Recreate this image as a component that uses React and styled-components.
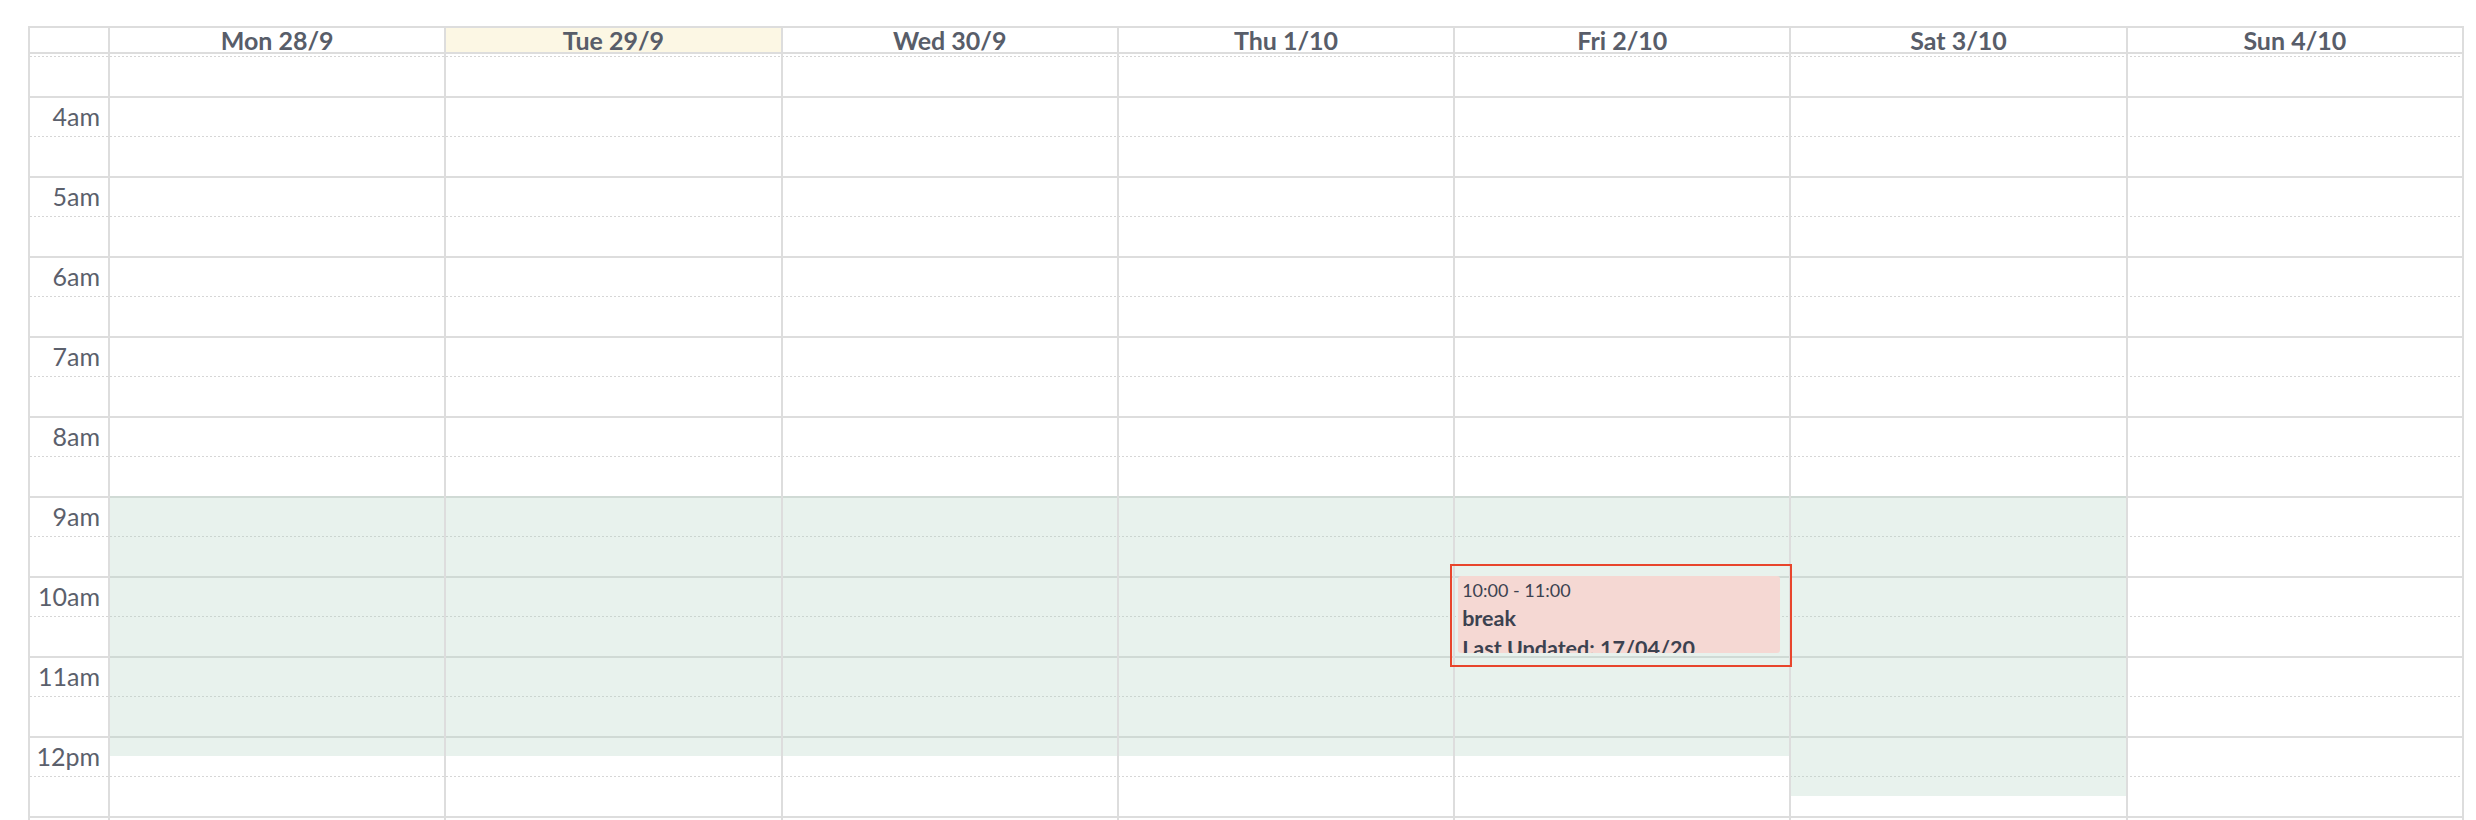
import React from 'react';
import styled, { createGlobalStyle } from 'styled-components';

const SLOT_HEIGHT = 40;
const FIRST_SLOT = 3 * 60 + 30; // the view is scrolled to 3:30
const LAST_SLOT = 13 * 60;
const BODY_OFFSET = 2;

const DAYS = [
  { key: 'mon', label: 'Mon 28/9', background: [{ start: '9:00', end: '12:15' }] },
  { key: 'tue', label: 'Tue 29/9', today: true, background: [{ start: '9:00', end: '12:15' }] },
  { key: 'wed', label: 'Wed 30/9', background: [{ start: '9:00', end: '12:15' }] },
  { key: 'thu', label: 'Thu 1/10', background: [{ start: '9:00', end: '12:15' }] },
  {
    key: 'fri',
    label: 'Fri 2/10',
    background: [{ start: '9:00', end: '12:15' }],
    events: [
      {
        id: 1,
        start: '10:00',
        end: '11:00',
        title: 'break',
        note: 'Last Updated: 17/04/20',
        selected: true,
      },
    ],
  },
  { key: 'sat', label: 'Sat 3/10', background: [{ start: '9:00', end: '12:45' }] },
  { key: 'sun', label: 'Sun 4/10' },
];

const toMinutes = (time) => {
  const [h, m] = time.split(':').map(Number);
  return h * 60 + m;
};

const toOffset = (time) => BODY_OFFSET + ((toMinutes(time) - FIRST_SLOT) / 30) * SLOT_HEIGHT;
const toHeight = (start, end) => ((toMinutes(end) - toMinutes(start)) / 30) * SLOT_HEIGHT;

const hourLabel = (minutes) => {
  const h = Math.floor(minutes / 60);
  if (h === 0) return '12am';
  if (h === 12) return '12pm';
  return h > 12 ? `${h - 12}pm` : `${h}am`;
};

const slots = [];
for (let m = FIRST_SLOT; m <= LAST_SLOT; m += 30) {
  slots.push({ minutes: m, hour: m % 60 === 0 });
}

function App() {
  return (
    <>
      <GlobalStyle />
      <Page>
        <Calendar>
          <HeaderRow>
            <AxisCell />
            {DAYS.map((day) => (
              <HeaderCell key={day.key} $today={day.today}>
                {day.label}
              </HeaderCell>
            ))}
          </HeaderRow>
          <Body>
            <Slats>
              {slots.map((slot) => (
                <SlotRow key={slot.minutes} $hour={slot.hour}>
                  <TimeLabel>{slot.hour ? hourLabel(slot.minutes) : ''}</TimeLabel>
                  <div />
                </SlotRow>
              ))}
            </Slats>
            <Columns>
              <AxisCell />
              {DAYS.map((day) => (
                <DayColumn key={day.key}>
                  {(day.background || []).map((bg) => (
                    <BgEvent
                      key={bg.start}
                      style={{ top: toOffset(bg.start), height: toHeight(bg.start, bg.end) }}
                    />
                  ))}
                  {(day.events || []).map((event) => (
                    <EventSlot
                      key={event.id}
                      $selected={event.selected}
                      style={{ top: toOffset(event.start), height: toHeight(event.start, event.end) }}
                    >
                      <EventBox>
                        <EventTime>
                          {event.start} - {event.end}
                        </EventTime>
                        <EventTitle>{event.title}</EventTitle>
                        <EventTitle>{event.note}</EventTitle>
                      </EventBox>
                    </EventSlot>
                  ))}
                </DayColumn>
              ))}
            </Columns>
          </Body>
        </Calendar>
      </Page>
    </>
  );
}

export default App;

const GlobalStyle = createGlobalStyle`
  html, body {
    margin: 0;
    height: 100%;
    overflow: hidden;
    background: #fff;
  }
  body {
    font-family: Lato, 'Open Sans', 'Liberation Sans', sans-serif;
    color: #585d69;
  }
`;

const Page = styled.div`
  height: 820px;
  box-sizing: border-box;
  padding: 26px 0 0 28px;
`;

const Calendar = styled.div`
  width: 2436px;
  height: 794px;
  box-sizing: border-box;
  border: 2px solid #dddddd;
  border-bottom: 0;
  display: flex;
  flex-direction: column;
`;

const HeaderRow = styled.div`
  display: grid;
  grid-template-columns: 78px repeat(7, 1fr);
  height: 26px;
  box-sizing: border-box;
  border-bottom: 2px solid #dddddd;
`;

const AxisCell = styled.div``;

const HeaderCell = styled.div`
  border-left: 2px solid #dddddd;
  background: ${(p) => (p.$today ? '#fcf7e4' : 'transparent')};
  display: flex;
  align-items: center;
  justify-content: center;
  font-size: 25px;
  font-weight: 700;
  line-height: 24px;
  color: #585d69;
  white-space: nowrap;
`;

const Body = styled.div`
  flex: 1;
  position: relative;
  overflow: hidden;
`;

const Slats = styled.div`
  padding-top: ${BODY_OFFSET}px;
`;

const SlotRow = styled.div`
  display: grid;
  grid-template-columns: 78px 1fr;
  height: ${SLOT_HEIGHT}px;
  box-sizing: border-box;
  border-top: ${(p) => (p.$hour ? '2px solid #dddddd' : '0')};
  background: ${(p) =>
    p.$hour
      ? 'none'
      : 'repeating-linear-gradient(to right, #d6d6d6 0 2px, transparent 2px 4px) top left / 100% 1px no-repeat'};
`;

const TimeLabel = styled.div`
  text-align: right;
  padding: 3px 8px 0 0;
  font-size: 25px;
  line-height: 1.2;
  color: #5b606c;
`;

const Columns = styled.div`
  position: absolute;
  inset: 0;
  display: grid;
  grid-template-columns: 78px repeat(7, 1fr);
`;

const DayColumn = styled.div`
  position: relative;
  border-left: 2px solid #dddddd;
`;

const BgEvent = styled.div`
  position: absolute;
  left: 0;
  right: 0;
  background: rgba(178, 212, 195, 0.3);
`;

const EventSlot = styled.div`
  position: absolute;
  left: 0;
  right: 0;
  z-index: 2;

  &::after {
    content: '';
    display: ${(p) => (p.$selected ? 'block' : 'none')};
    position: absolute;
    top: -12px;
    bottom: -11px;
    left: -5px;
    right: -3px;
    border: 2px solid #e8452c;
    pointer-events: none;
  }
`;

const EventBox = styled.div`
  height: calc(100% - 3px);
  margin: 0 9px 0 3px;
  box-sizing: border-box;
  padding: 1px 4px 0;
  border-radius: 3px;
  background: #f5d8d3;
  color: #3c4250;
  overflow: hidden;
`;

const EventTime = styled.div`
  font-size: 18px;
  line-height: 26px;
  white-space: nowrap;
`;

const EventTitle = styled.div`
  font-size: 21.5px;
  font-weight: 700;
  line-height: 30px;
  white-space: nowrap;
`;
